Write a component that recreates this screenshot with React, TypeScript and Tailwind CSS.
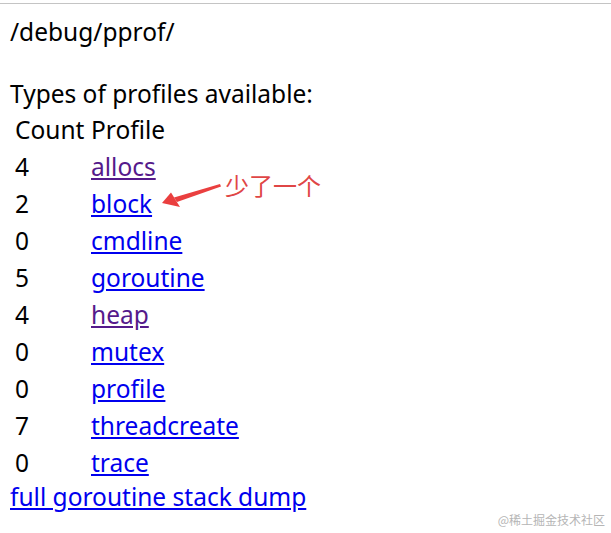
import React from 'react';

const PROFILES: { count: number; name: string; visited?: boolean }[] = [
  { count: 4, name: 'allocs', visited: true },
  { count: 2, name: 'block' },
  { count: 0, name: 'cmdline' },
  { count: 5, name: 'goroutine' },
  { count: 4, name: 'heap', visited: true },
  { count: 0, name: 'mutex' },
  { count: 0, name: 'profile' },
  { count: 7, name: 'threadcreate' },
  { count: 0, name: 'trace' },
];

const font = { fontFamily: '"Noto Sans", "Noto Sans CJK SC", sans-serif' };

// red hand-drawn annotation arrow pointing at "block"
const Arrow: React.FC = () => (
  <svg width="70" height="40" viewBox="0 0 70 40" className="absolute left-[155px] top-[175px]">
    <path d="M65 9 L66 11.5 L22 27 L19 22.5 Z" fill="#ea3f3f" />
    <path d="M7 28 L16 17.5 L25 32 Z" fill="#ea3f3f" />
  </svg>
);

const App: React.FC = () => {
  return (
    <div className="relative w-[611px] h-[533px] bg-white text-black overflow-hidden" style={font}>
      <div className="h-[3px]" />
      <div className="h-px bg-[#c4c4c4]" />
      <div className="px-[10px] text-[24.5px] leading-[32px]">
        <div className="pt-[12px]">/debug/pprof/</div>
        <div className="mt-[30px]">Types of profiles available:</div>
        <div className="pl-[5px] pt-px">
          <div className="flex h-[37px] items-center">
            <span className="w-[76px]">Count</span>
            <span>Profile</span>
          </div>
          {PROFILES.map((p) => (
            <div key={p.name} className="flex h-[37px] items-center">
              <span className="w-[76px]">{p.count}</span>
              <a
                href="#"
                className={`underline ${p.visited ? 'text-[#551a8b]' : 'text-[#0000ee]'}`}
              >
                {p.name}
              </a>
            </div>
          ))}
        </div>
        <a href="#" className="underline text-[#0000ee]">full goroutine stack dump</a>
      </div>

      <Arrow />
      <div
        className="absolute left-[225px] top-[168px] text-[24px] leading-[34px] text-[#df4646]"
        style={{ fontFamily: '"Noto Sans CJK SC", sans-serif' }}
      >
        少了一个
      </div>

      <div
        className="absolute right-[6px] bottom-[4px] text-[12px] text-[#b5b5b5]"
        style={{ fontFamily: '"Noto Sans CJK SC", sans-serif' }}
      >
        @稀土掘金技术社区
      </div>
    </div>
  );
};

export default App;
